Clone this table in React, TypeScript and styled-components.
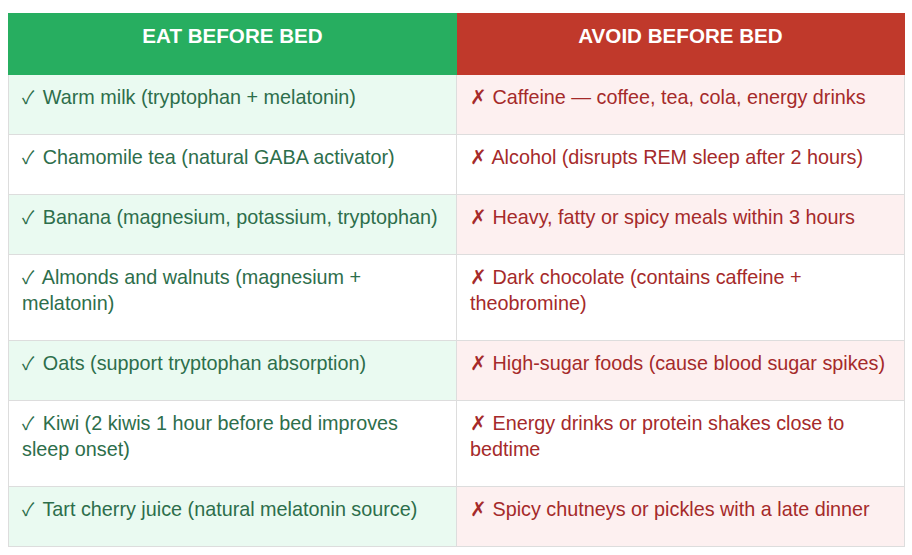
import React from "react";
import styled, { createGlobalStyle } from "styled-components";

const Global = createGlobalStyle`
  html, body { margin: 0; padding: 0; background: #ffffff; }
  body { font-family: "Liberation Sans", Arial, sans-serif; }
`;

const Wrap = styled.div`
  padding: 13px 7px 8px 8px;
`;

const Table = styled.table`
  width: 897px;
  border-collapse: collapse;
  table-layout: fixed;
  font-size: 19.8px;
  line-height: 26px;
`;

const Head = styled.th<{ $tone: "eat" | "avoid" }>`
  background: ${(p) => (p.$tone === "eat" ? "#27ae60" : "#c0392b")};
  color: #ffffff;
  font-weight: 700;
  font-size: 20.6px;
  text-align: center;
  vertical-align: top;
  padding: 9px 14px 25px;
  border: 1px solid ${(p) => (p.$tone === "eat" ? "#27ae60" : "#c0392b")};
`;

const Cell = styled.td<{ $tone: "eat" | "avoid"; $tint: boolean }>`
  background: ${(p) =>
    p.$tint ? (p.$tone === "eat" ? "#eafaf1" : "#fdf0f0") : "#ffffff"};
  color: ${(p) => (p.$tone === "eat" ? "#2d6e4b" : "#a52a2a")};
  border: 1px solid #dddddd;
  padding: 9px 14px 24px 13px;
  vertical-align: top;
  text-align: left;
`;

const Mark = styled.span<{ $size: number; $gap: number; $weight: number }>`
  font-family: "Noto Sans CJK SC", "DejaVu Sans", sans-serif;
  font-size: ${(p) => p.$size}px;
  font-weight: ${(p) => p.$weight};
  line-height: 0;
  margin-right: ${(p) => p.$gap}px;
`;

const rows: [string, string][] = [
  ["Warm milk (tryptophan + melatonin)", "Caffeine — coffee, tea, cola, energy drinks"],
  ["Chamomile tea (natural GABA activator)", "Alcohol (disrupts REM sleep after 2 hours)"],
  ["Banana (magnesium, potassium, tryptophan)", "Heavy, fatty or spicy meals within 3 hours"],
  ["Almonds and walnuts (magnesium + melatonin)", "Dark chocolate (contains caffeine + theobromine)"],
  ["Oats (support tryptophan absorption)", "High-sugar foods (cause blood sugar spikes)"],
  ["Kiwi (2 kiwis 1 hour before bed improves sleep onset)", "Energy drinks or protein shakes close to bedtime"],
  ["Tart cherry juice (natural melatonin source)", "Spicy chutneys or pickles with a late dinner"],
];

export default function App() {
  return (
    <>
      <Global />
      <Wrap>
        <Table>
          <thead>
            <tr>
              <Head $tone="eat">EAT BEFORE BED</Head>
              <Head $tone="avoid">AVOID BEFORE BED</Head>
            </tr>
          </thead>
          <tbody>
            {rows.map(([eat, avoid], i) => (
              <tr key={i}>
                <Cell $tone="eat" $tint={i % 2 === 0}>
                  <Mark $size={18} $gap={3} $weight={400}>✓</Mark> {eat}
                </Cell>
                <Cell $tone="avoid" $tint={i % 2 === 0}>
                  <Mark $size={20} $gap={0} $weight={300}>✗</Mark> {avoid}
                </Cell>
              </tr>
            ))}
          </tbody>
        </Table>
      </Wrap>
    </>
  );
}
